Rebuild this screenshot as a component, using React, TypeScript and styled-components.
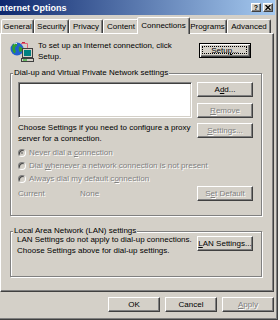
import React from "react"
import styled, { createGlobalStyle } from "styled-components"

const face = "#d4d0c8"

const GlobalStyle = createGlobalStyle`
  html, body { margin: 0; padding: 0; background: #f1f0ec; overflow: hidden; }
  body { font-family: "Liberation Sans", Arial, sans-serif; font-size: 8px; color: #000; }
  #root { width: 280px; height: 320px; overflow: hidden; }
`

const Window = styled.div`
  box-sizing: border-box;
  width: 288px;
  height: 323px;
  margin: -3px 0 0 -10px;
  padding: 2px;
  background: ${face};
  border: 1px solid;
  border-color: ${face} #404040 #404040 ${face};
  box-shadow: inset 1px 1px #fff, inset -1px -1px #808080;
  display: flex;
  flex-direction: column;
`

const TitleBar = styled.div`
  height: 15px;
  flex-shrink: 0;
  display: flex;
  align-items: center;
  padding: 0 2px 0 4px;
  background: linear-gradient(to right, #0a246a, #a6caf0);
`

const Title = styled.span`
  flex: 1;
  color: #fff;
  font-weight: bold;
  font-size: 9px;
`

const CaptionButtons = styled.div`
  display: flex;
  gap: 2px;
`

const CaptionButton = styled.span`
  box-sizing: border-box;
  width: 10px;
  height: 9px;
  background: ${face};
  border: 1px solid;
  border-color: #fff #404040 #404040 #fff;
  box-shadow: inset -1px -1px #808080;
  display: flex;
  align-items: center;
  justify-content: center;
  font-weight: bold;
  font-size: 7px;
  line-height: 7px;
`

const Body = styled.div`
  display: flex;
  flex-direction: column;
  padding: 2px 1px 0 7px;
`

const TabRow = styled.div`
  height: 16px;
  display: flex;
  align-items: flex-end;
  padding-left: 1px;
`

const Tab = styled.div<{ $w: number; $active?: boolean }>`
  box-sizing: border-box;
  width: ${p => p.$w + (p.$active ? 4 : 0)}px;
  height: ${p => (p.$active ? 17 : 14)}px;
  margin: 0 ${p => (p.$active ? -2 : 0)}px ${p => (p.$active ? -1 : 0)}px;
  position: relative;
  z-index: ${p => (p.$active ? 1 : 0)};
  background: ${face};
  border: 1px solid;
  border-bottom: none;
  border-color: #fff #404040 transparent #fff;
  border-radius: 2px 2px 0 0;
  box-shadow: inset -1px 0 #808080;
  display: flex;
  align-items: center;
  justify-content: center;
  padding-bottom: ${p => (p.$active ? 2 : 0)}px;
  white-space: nowrap;
`

const Panel = styled.div`
  box-sizing: border-box;
  height: 259px;
  border: 1px solid;
  border-color: #fff #404040 #404040 #fff;
  box-shadow: inset -1px -1px #808080;
  padding: 4px 11px 0 9px;
  display: flex;
  flex-direction: column;
`

const TopRow = styled.div`
  height: 35px;
  display: flex;
  align-items: flex-start;
`

const Intro = styled.div`
  margin: 2px 0 0 4px;
  line-height: 11px;
`

const Group = styled.div<{ $h: number }>`
  position: relative;
  box-sizing: border-box;
  height: ${p => p.$h}px;
  border: 1px solid #808080;
  box-shadow: inset 1px 1px #fff, 1px 1px #fff;
`

const GroupLabel = styled.span`
  position: absolute;
  top: -7px;
  left: 2px;
  padding: 0 1px;
  line-height: 11px;
  background: ${face};
  white-space: nowrap;
`

const DialContent = styled.div`
  padding: 8px 8px 0 7px;
`

const DialGrid = styled.div`
  display: grid;
  grid-template-columns: 1fr 56px;
  column-gap: 5px;
`

const ListColumn = styled.div`
  display: flex;
  flex-direction: column;
`

const ListBox = styled.div`
  box-sizing: border-box;
  height: 36px;
  background: #fff;
  border: 1px solid;
  border-color: #808080 #fff #fff #808080;
  box-shadow: inset 1px 1px #404040, inset -1px -1px ${face};
`

const HelpText = styled.div`
  margin-top: 4px;
  line-height: 11px;
`

const ButtonColumn = styled.div`
  display: flex;
  flex-direction: column;
  gap: 5.5px;
`

const Button = styled.button<{ $w?: number; $default?: boolean; $focus?: boolean }>`
  position: relative;
  box-sizing: border-box;
  width: ${p => p.$w ?? 56}px;
  height: 15px;
  padding: 0;
  flex-shrink: 0;
  font: inherit;
  line-height: 13px;
  text-align: center;
  color: ${p => (p.disabled ? "#808080" : "#000")};
  text-shadow: ${p => (p.disabled ? "1px 1px 0 #fff" : "none")};
  background: ${face};
  border: 1px solid;
  border-color: ${p => (p.$default ? "#000" : "#fff #404040 #404040 #fff")};
  box-shadow: ${p =>
    p.$default
      ? "inset 1px 1px #fff, inset -1px -1px #404040, inset -2px -2px #808080"
      : "inset -1px -1px #808080"};
  &::after {
    content: "";
    display: ${p => (p.$focus ? "block" : "none")};
    position: absolute;
    inset: 2px 3px 3px 2px;
    border: 1px dotted #000;
  }
`

const RadioList = styled.div`
  margin-top: 2px;
  display: flex;
  flex-direction: column;
`

const RadioRow = styled.div`
  height: 13px;
  display: flex;
  align-items: center;
  gap: 3px;
  color: #808080;
  text-shadow: 1px 1px 0 #fff;
`

const Radio = styled.span<{ $on?: boolean }>`
  box-sizing: border-box;
  width: 8px;
  height: 8px;
  border-radius: 50%;
  border: 1px solid;
  border-color: #808080 #fff #fff #808080;
  box-shadow: inset 1px 1px #404040;
  background: ${face};
  display: flex;
  align-items: center;
  justify-content: center;
  &::after {
    content: "";
    width: 2px;
    height: 2px;
    border-radius: 50%;
    background: ${p => (p.$on ? "#808080" : "transparent")};
  }
`

const CurrentRow = styled.div`
  height: 16px;
  display: flex;
  align-items: center;
  color: #808080;
  text-shadow: 1px 1px 0 #fff;
`

const CurrentLabel = styled.span`
  width: 62px;
`

const Spacer = styled.span`
  flex: 1;
`

const LanContent = styled.div`
  display: flex;
  align-items: flex-start;
  justify-content: space-between;
  padding: 2px 8px 0 6px;
`

const LanText = styled.div`
  line-height: 11px;
`

const LanGroup = styled(Group)`
  margin-top: 15px;
`

const Footer = styled.div`
  margin-top: 5px;
  display: flex;
  justify-content: flex-end;
  gap: 5px;
`

const tabs = [
  { label: "General", w: 33 },
  { label: "Security", w: 35 },
  { label: "Privacy", w: 34 },
  { label: "Content", w: 36 },
  { label: "Connections", w: 49, active: true },
  { label: "Programs", w: 39 },
  { label: "Advanced", w: 44 },
]

const ConnectIcon = () => (
  <svg width="24" height="22" viewBox="0 0 24 22" style={{ flexShrink: 0, marginTop: 3 }}>
    <path d="M11 2.5 h6.5 v5" stroke="#e0607a" fill="none" />
    <path d="M12 1.5 h3" stroke="#c02040" fill="none" />
    <circle cx="7" cy="8" r="6.5" fill="#2060d0" />
    <path d="M2.5 4 q2 -2.5 4.5 -1.5 q1 2 -1 3 q-2 1.5 -0.5 3.5 q1 2 -1 3.5 q-3 -2.5 -2 -8.5z" fill="#2ea02e" />
    <path d="M9 5.5 q3 0 3.5 3 q-1 3 -3 2.5 q-1.5 -2.5 -0.5 -5.5z" fill="#2ea02e" />
    <path d="M4 3 q1.5 -1 3 -0.5" stroke="#e8f0ff" fill="none" />
    <rect x="12.5" y="7.5" width="10" height="9" fill={face} stroke="#404040" />
    <rect x="14" y="9" width="7" height="6" fill="#008080" />
    <rect x="11.5" y="17.5" width="12" height="3" fill={face} stroke="#404040" />
    <path d="M13 19 h4" stroke="#00a000" />
  </svg>
)

export default function App() {
  return (
    <>
      <GlobalStyle />
      <Window>
        <TitleBar>
          <Title>Internet Options</Title>
          <CaptionButtons>
            <CaptionButton>?</CaptionButton>
            <CaptionButton>
              <svg width="6" height="5" viewBox="0 0 6 5">
                <path d="M0.5 0 L5.5 5 M5.5 0 L0.5 5" stroke="#000" strokeWidth="1.3" />
              </svg>
            </CaptionButton>
          </CaptionButtons>
        </TitleBar>
        <Body>
          <TabRow>
            {tabs.map(t => (
              <Tab key={t.label} $w={t.w} $active={t.active}>
                {t.label}
              </Tab>
            ))}
          </TabRow>
          <Panel>
            <TopRow>
              <ConnectIcon />
              <Intro>
                To set up an Internet connection, click
                <br />
                Setup.
              </Intro>
              <Spacer />
              <Button $w={52} $default $focus style={{ marginTop: 5, marginRight: 11 }}>
                Setu<u>p</u>...
              </Button>
            </TopRow>

            <Group $h={143}>
              <GroupLabel>Dial-up and Virtual Private Network settings</GroupLabel>
              <DialContent>
                <DialGrid>
                  <ListColumn>
                    <ListBox />
                    <HelpText>
                      Choose Settings if you need to configure a proxy
                      <br />
                      server for a connection.
                    </HelpText>
                  </ListColumn>
                  <ButtonColumn>
                    <Button>
                      A<u>d</u>d...
                    </Button>
                    <Button disabled>
                      <u>R</u>emove
                    </Button>
                    <Button disabled>
                      <u>S</u>ettings...
                    </Button>
                  </ButtonColumn>
                </DialGrid>
                <RadioList>
                  <RadioRow>
                    <Radio $on />
                    <span>
                      Never dial a <u>c</u>onnection
                    </span>
                  </RadioRow>
                  <RadioRow>
                    <Radio />
                    <span>
                      Dial <u>w</u>henever a network connection is not present
                    </span>
                  </RadioRow>
                  <RadioRow>
                    <Radio />
                    <span>
                      Always dial my default c<u>o</u>nnection
                    </span>
                  </RadioRow>
                </RadioList>
                <CurrentRow>
                  <CurrentLabel>Current</CurrentLabel>
                  <span>None</span>
                  <Spacer />
                  <Button disabled>
                    S<u>e</u>t Default
                  </Button>
                </CurrentRow>
              </DialContent>
            </Group>

            <LanGroup $h={46}>
              <GroupLabel>Local Area Network (LAN) settings</GroupLabel>
              <LanContent>
                <LanText>
                  LAN Settings do not apply to dial-up connections.
                  <br />
                  Choose Settings above for dial-up settings.
                </LanText>
                <Button style={{ marginTop: 2 }}>
                  <u>L</u>AN Settings...
                </Button>
              </LanContent>
            </LanGroup>
          </Panel>
          <Footer>
            <Button $w={52}>OK</Button>
            <Button $w={52}>Cancel</Button>
            <Button $w={52} disabled>
              <u>A</u>pply
            </Button>
          </Footer>
        </Body>
      </Window>
    </>
  )
}
